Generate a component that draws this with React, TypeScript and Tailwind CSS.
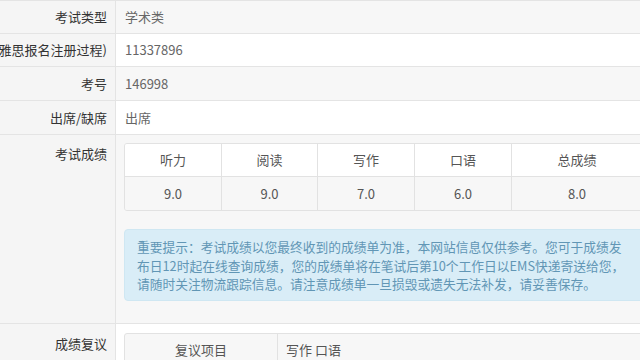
import type { ReactNode } from 'react'

const font = { fontFamily: '"Noto Sans CJK SC", "Noto Sans", sans-serif' }

interface RowProps {
  label: string
  children: ReactNode
  striped?: boolean
  height: string
}

function InfoRow({ label, children, striped, height }: RowProps) {
  return (
    <div className={`flex border-b border-[#e4e4e4] ${height}`}>
      <div className="w-[116px] shrink-0 bg-[#f5f5f5] border-r border-[#e4e4e4] flex items-center justify-end pr-[8px] overflow-hidden whitespace-nowrap text-[13px] text-[#333]">
        {label}
      </div>
      <div
        className={`flex-1 flex items-center px-[9px] text-[13px] text-[#666] ${
          striped ? 'bg-[#f7f7f7]' : 'bg-white'
        }`}
      >
        {children}
      </div>
    </div>
  )
}

const scores = [
  { name: '听力', value: '9.0', w: 'w-[97px]' },
  { name: '阅读', value: '9.0', w: 'w-[96px]' },
  { name: '写作', value: '7.0', w: 'w-[97px]' },
  { name: '口语', value: '6.0', w: 'w-[97px]' },
  { name: '总成绩', value: '8.0', w: 'w-[130px]' },
]

export default function App() {
  return (
    <div className="w-[640px] h-[360px] overflow-hidden bg-white" style={font}>
      <div className="w-[680px] border-t border-[#e4e4e4]">
        <InfoRow label="考试类型" striped height="h-[33px]">
          学术类
        </InfoRow>
        <InfoRow label="报名号（雅思报名注册过程)" height="h-[33px]">
          11337896
        </InfoRow>
        <InfoRow label="考号" striped height="h-[34px]">
          146998
        </InfoRow>
        <InfoRow label="出席/缺席" height="h-[34px]">
          出席
        </InfoRow>

        {/* scores */}
        <div className="flex border-b border-[#e4e4e4] h-[189px]">
          <div className="w-[116px] shrink-0 bg-[#f5f5f5] border-r border-[#e4e4e4] flex justify-end pr-[8px] pt-[9px] text-[13px] text-[#333]">
            考试成绩
          </div>
          <div className="flex-1 bg-[#f7f7f7] pl-[8px] pt-[8px]">
            <div className="border border-[#e2e2e2] rounded-[3px] text-[13px] text-[#555] overflow-hidden w-[560px]">
              <div className="flex h-[33px] bg-white border-b border-[#e2e2e2]">
                {scores.map((s, i) => (
                  <div
                    key={s.name}
                    className={`${s.w} flex items-center justify-center ${
                      i < scores.length - 1 ? 'border-r border-[#e2e2e2]' : ''
                    }`}
                  >
                    {s.name}
                  </div>
                ))}
              </div>
              <div className="flex h-[33px] bg-[#f7f7f7]">
                {scores.map((s, i) => (
                  <div
                    key={s.name}
                    className={`${s.w} flex items-center justify-center ${
                      i < scores.length - 1 ? 'border-r border-[#e2e2e2]' : ''
                    }`}
                  >
                    {s.value}
                  </div>
                ))}
              </div>
            </div>

            <div className="mt-[18px] w-[560px] rounded-[4px] bg-[#d9edf7] border border-[#cfe7f2] pl-[12px] pt-[8px] pb-[6px] text-[12.75px] leading-[18.5px] text-[#6196b5] whitespace-nowrap">
              重要提示：考试成绩以您最终收到的成绩单为准，本网站信息仅供参考。您可于成绩发
              <br />
              布日12时起在线查询成绩，您的成绩单将在笔试后第10个工作日以EMS快递寄送给您，
              <br />
              请随时关注物流跟踪信息。请注意成绩单一旦损毁或遗失无法补发，请妥善保存。
            </div>
          </div>
        </div>

        {/* review */}
        <div className="flex h-[60px]">
          <div className="w-[116px] shrink-0 bg-[#f5f5f5] border-r border-[#e4e4e4] flex justify-end pr-[8px] pt-[10px] text-[13px] text-[#333]">
            成绩复议
          </div>
          <div className="flex-1 bg-white pl-[8px] pt-[9px]">
            <div className="border border-[#e2e2e2] rounded-[3px] text-[13px] text-[#555] w-[560px] flex h-[34px] bg-[#f7f7f7]">
              <div className="w-[153px] border-r border-[#e2e2e2] flex items-center justify-center">
                复议项目
              </div>
              <div className="flex-1 flex items-center px-[8px]">写作 口语</div>
            </div>
          </div>
        </div>
      </div>
    </div>
  )
}
